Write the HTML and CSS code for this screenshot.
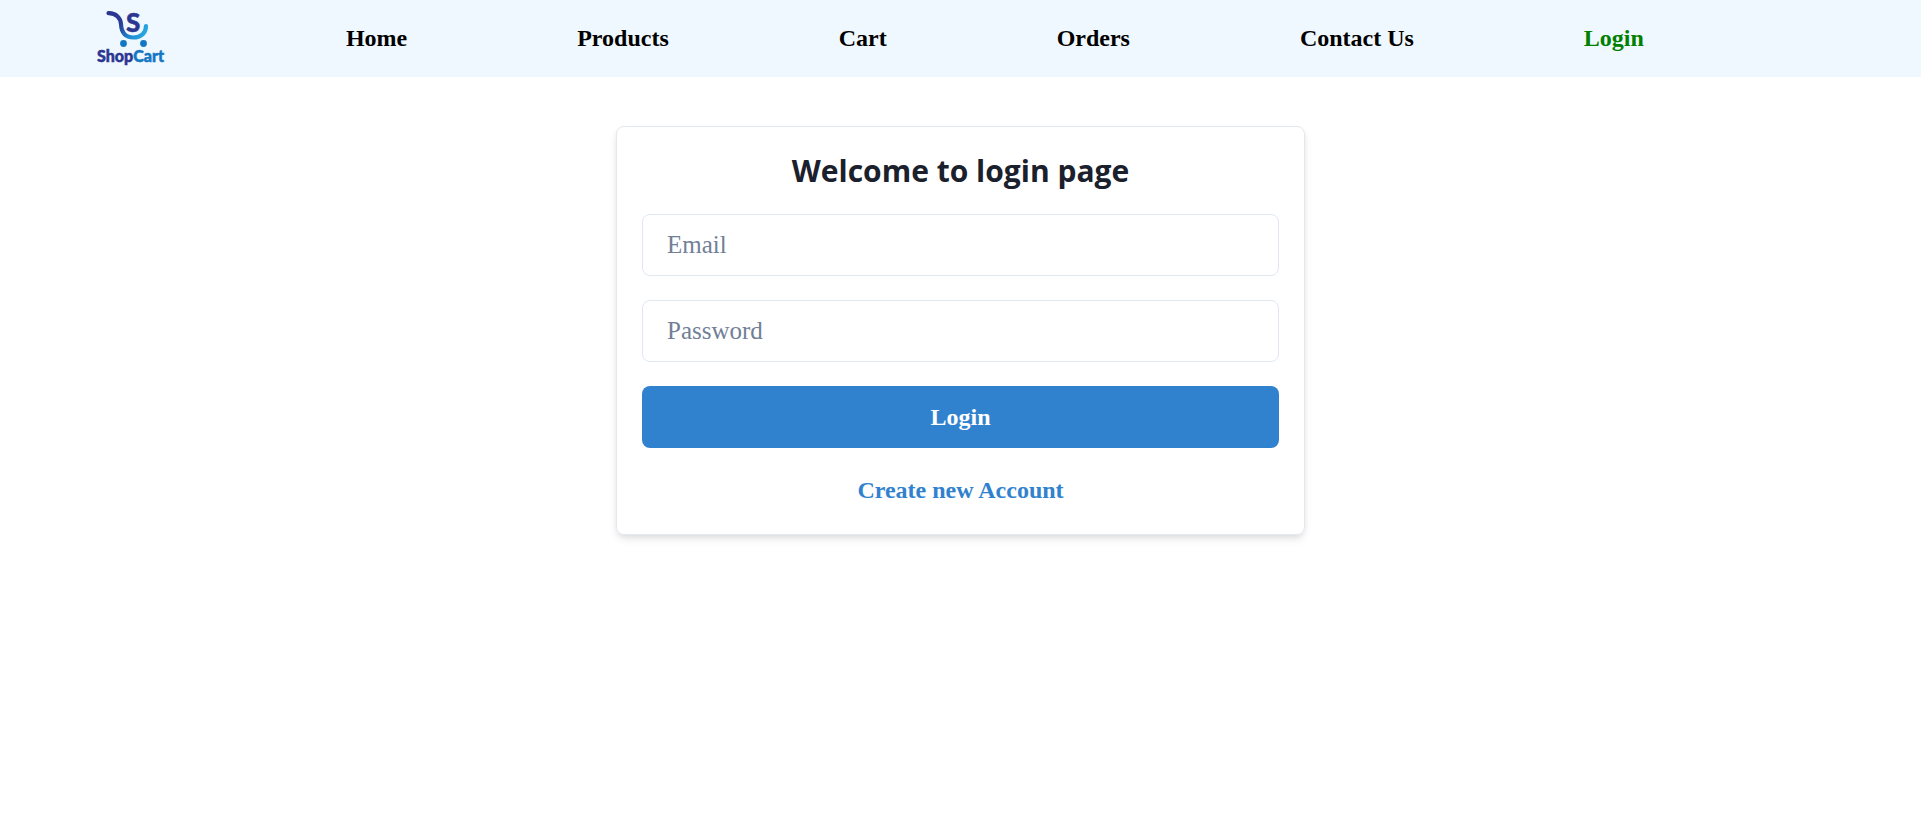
FILE: index.html
```html
<!DOCTYPE html>
<html lang="en">
<head>
<meta charset="utf-8">
<meta name="viewport" content="width=device-width, initial-scale=1">
<title>ShopCart</title>
<link rel="stylesheet" href="styles.css">
</head>
<body>
<header class="site-header">
  <nav class="nav" aria-label="Main">
    <a class="logo" href="#" aria-label="ShopCart">
      <svg class="logo-art" viewBox="5 0 91 77" aria-hidden="true">
        <defs>
          <linearGradient id="swoosh" gradientUnits="userSpaceOnUse" x1="34" y1="16" x2="67" y2="32">
            <stop offset="0" stop-color="#2b3691"/>
            <stop offset="0.25" stop-color="#2b3b98"/>
            <stop offset="0.6" stop-color="#1d86cf"/>
            <stop offset="1" stop-color="#29abe2"/>
          </linearGradient>
        </defs>
        <path d="M28.500 13.200C36 13 40.500 18 41 24C41.500 33 46 37.500 53.500 37.500C61 37.500 66 33 66 26" fill="none" stroke="url(#swoosh)" stroke-width="4.200" stroke-linecap="round"/>
        <text class="logo-letter" x="46" y="32">S</text>
        <circle cx="43.500" cy="43.500" r="3.400" fill="#1277c4"/>
        <circle cx="63.500" cy="43.500" r="3.400" fill="#1277c4"/>
        <text class="logo-name" x="17" y="62"><tspan class="logo-shop">Shop</tspan><tspan class="logo-cart">Cart</tspan></text>
      </svg>
    </a>
    <a class="nav-link" href="#">Home</a>
    <a class="nav-link" href="#">Products</a>
    <a class="nav-link" href="#">Cart</a>
    <a class="nav-link" href="#">Orders</a>
    <a class="nav-link" href="#">Contact Us</a>
    <a class="nav-link nav-link-login" href="#">Login</a>
  </nav>
</header>
<main class="page">
  <form class="card">
    <h1 class="title">Welcome to login page</h1>
    <input class="field" type="email" placeholder="Email" aria-label="Email">
    <input class="field" type="password" placeholder="Password" aria-label="Password">
    <button class="submit" type="button">Login</button>
    <a class="create" href="#">Create new Account</a>
  </form>
</main>
</body>
</html>
```
FILE: styles.css
```css
* {
  box-sizing: border-box;
}

body {
  margin: 0;
  background: #fff;
  color: #000;
  font-family: "Liberation Serif", "Times New Roman", serif;
  font-size: 24px;
}

a {
  text-decoration: none;
}

.site-header {
  background: #f0f8ff;
}

.nav {
  display: flex;
  justify-content: space-around;
  align-items: center;
  width: 90%;
}

.logo-art {
  display: block;
  width: 91px;
  height: 77px;
}

.logo-letter {
  font: 900 26px Lato, sans-serif;
  fill: #2b3691;
  stroke: #2b3691;
  stroke-width: 0.5px;
}

.logo-name {
  font: 900 16px Lato, sans-serif;
  stroke-width: 0.5px;
}

.logo-shop {
  fill: #2b3691;
  stroke: #2b3691;
}

.logo-cart {
  fill: #1277c4;
  stroke: #1277c4;
}

.nav-link {
  color: #000;
  font-weight: 700;
}

.nav-link-login {
  color: #008000;
}

.page {
  padding: 49px 16px;
}

.card {
  display: flex;
  flex-direction: column;
  gap: 24px;
  max-width: 689px;
  margin: 0 auto;
  padding: 25px;
  border: 1px solid #e2e8f0;
  border-radius: 8px;
  box-shadow: 0 5px 8px -1px rgba(0, 0, 0, 0.1), 0 2px 5px -1px rgba(0, 0, 0, 0.06);
}

.title {
  margin: 0;
  color: #1a202c;
  font-family: "Open Sans", sans-serif;
  font-size: 30px;
  font-weight: 700;
  line-height: 38px;
  text-align: center;
}

.field,
.submit {
  width: 100%;
  height: 62px;
  border-radius: 8px;
  font: inherit;
}

.field {
  padding: 0 24px;
  border: 1px solid #e2e8f0;
  background: #fff;
  font-size: 25px;
}

.field::placeholder {
  color: #718096;
  opacity: 1;
}

.submit {
  border: 0;
  background: #3182ce;
  color: #fff;
  font-weight: 700;
}

.create {
  align-self: center;
  color: #3182ce;
  font-weight: 700;
  line-height: 37px;
}
```
